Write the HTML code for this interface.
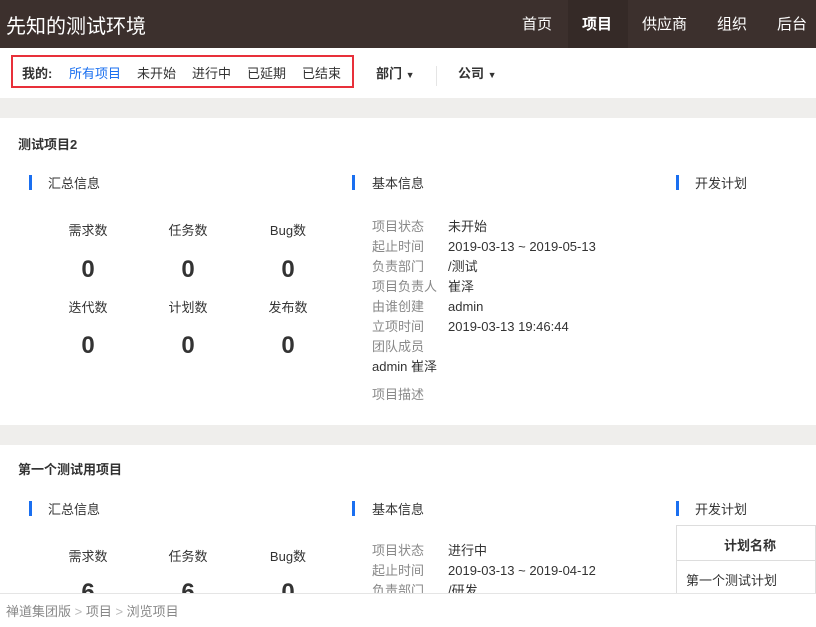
<!DOCTYPE html>
<html><head><meta charset="utf-8"><style>
*{margin:0;padding:0;box-sizing:border-box}
body{width:816px;height:627px;overflow:hidden;background:#efeeec;font-family:"Liberation Sans","Noto Sans CJK SC",sans-serif;font-size:13px;color:#333;position:relative}
.a{position:absolute;white-space:nowrap}
#hd{position:absolute;left:0;top:0;width:816px;height:48px;background:#3c302d;color:#fff}
#sub{position:absolute;left:0;top:48px;width:816px;height:50px;background:#fff}
.card{position:absolute;left:0;width:816px;background:#fff}
.bar{position:absolute;width:3px;height:15px;background:#1a6ff0}
.lbl{color:#888}
.num{font-size:24px;font-weight:bold;color:#333;text-align:center;width:60px}
.st{text-align:center;width:60px}
</style></head><body>
<div id="hd">
<div class="a" style="left:6px;top:10px;font-size:20px;color:#fff">先知的测试环境</div>
<div class="a" style="left:568px;top:0;width:60px;height:48px;background:#352a27"></div>
<div class="a" style="left:522px;top:13px;font-size:15px">首页</div>
<div class="a" style="left:582px;top:13px;font-size:15px;font-weight:bold">项目</div>
<div class="a" style="left:642px;top:13px;font-size:15px">供应商</div>
<div class="a" style="left:717px;top:13px;font-size:15px">组织</div>
<div class="a" style="left:777px;top:13px;font-size:15px">后台</div>
</div>
<div id="sub">
<div class="a" style="left:11px;top:7px;width:343px;height:33px;border:2px solid #e8303a"></div>
<div class="a" style="left:22px;top:15px;font-weight:bold;color:#333">我的:</div>
<div class="a" style="left:69px;top:15px;color:#1a6ff0">所有项目</div>
<div class="a" style="left:137px;top:15px">未开始</div>
<div class="a" style="left:192px;top:15px">进行中</div>
<div class="a" style="left:247px;top:15px">已延期</div>
<div class="a" style="left:302px;top:15px">已结束</div>
<div class="a" style="left:376px;top:15px;font-weight:bold">部门 <span style="font-size:9px">▼</span></div>
<div class="a" style="left:436px;top:18px;width:1px;height:20px;background:#e5e5e5"></div>
<div class="a" style="left:458px;top:15px;font-weight:bold">公司 <span style="font-size:9px">▼</span></div>
</div>

<div class="card" style="top:118px;height:307px">
<div class="a" style="left:18px;top:16px;font-weight:bold">测试项目2</div>
<div class="bar" style="left:29px;top:57px"></div><div class="a" style="left:48px;top:55px">汇总信息</div>
<div class="bar" style="left:352px;top:57px"></div><div class="a" style="left:372px;top:55px">基本信息</div>
<div class="bar" style="left:676px;top:57px"></div><div class="a" style="left:695px;top:55px">开发计划</div>
<div class="a st" style="left:58px;top:102px">需求数</div><div class="a st" style="left:158px;top:102px">任务数</div><div class="a st" style="left:258px;top:102px">Bug数</div>
<div class="a num" style="left:58px;top:138px">0</div><div class="a num" style="left:158px;top:138px">0</div><div class="a num" style="left:258px;top:138px">0</div>
<div class="a st" style="left:58px;top:179px">迭代数</div><div class="a st" style="left:158px;top:179px">计划数</div><div class="a st" style="left:258px;top:179px">发布数</div>
<div class="a num" style="left:58px;top:214px">0</div><div class="a num" style="left:158px;top:214px">0</div><div class="a num" style="left:258px;top:214px">0</div>
<div class="a lbl" style="left:372px;top:99px;line-height:20px">项目状态<br>起止时间<br>负责部门<br>项目负责人<br>由谁创建<br>立项时间<br>团队成员</div>
<div class="a" style="left:448px;top:99px;line-height:20px">未开始<br>2019-03-13 ~ 2019-05-13<br>/测试<br>崔泽<br>admin<br>2019-03-13 19:46:44</div>
<div class="a" style="left:372px;top:238px">admin 崔泽</div>
<div class="a lbl" style="left:372px;top:266px">项目描述</div>
</div>

<div class="card" style="top:445px;height:148px">
<div class="a" style="left:18px;top:14px;font-weight:bold">第一个测试用项目</div>
<div class="bar" style="left:29px;top:56px"></div><div class="a" style="left:48px;top:54px">汇总信息</div>
<div class="bar" style="left:352px;top:56px"></div><div class="a" style="left:372px;top:54px">基本信息</div>
<div class="bar" style="left:676px;top:56px"></div><div class="a" style="left:695px;top:54px">开发计划</div>
<div class="a st" style="left:58px;top:101px">需求数</div><div class="a st" style="left:158px;top:101px">任务数</div><div class="a st" style="left:258px;top:101px">Bug数</div>
<div class="a num" style="left:58px;top:134px">6</div><div class="a num" style="left:158px;top:134px">6</div><div class="a num" style="left:258px;top:134px">0</div>
<div class="a lbl" style="left:372px;top:96px;line-height:20px">项目状态<br>起止时间<br>负责部门</div>
<div class="a" style="left:448px;top:96px;line-height:20px">进行中<br>2019-03-13 ~ 2019-04-12<br>/研发</div>
<div class="a" style="left:676px;top:80px;width:140px;height:80px;border:1px solid #ddd"></div>
<div class="a" style="left:676px;top:115px;width:140px;height:1px;background:#ddd"></div>
<div class="a" style="left:724px;top:90px;font-weight:bold">计划名称</div>
<div class="a" style="left:686px;top:125px">第一个测试计划</div>
</div>

<div class="a" style="left:0;top:593px;width:816px;height:34px;background:#fff;border-top:1px solid #e5e5e5"></div>
<div class="a" style="left:6px;top:601px;color:#888">禅道集团版 <span style="color:#bbb">&gt;</span> 项目 <span style="color:#bbb">&gt;</span> 浏览项目</div>
</body></html>
